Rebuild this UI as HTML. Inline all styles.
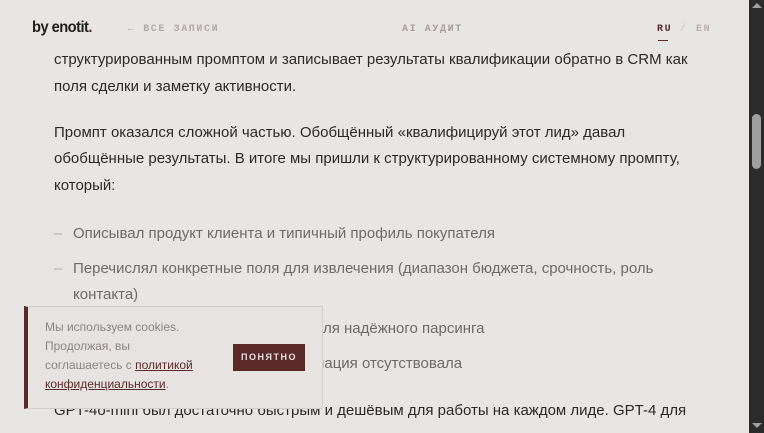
<!DOCTYPE html>
<html><head><meta charset="utf-8"><style>
*{margin:0;padding:0;box-sizing:border-box}
body{width:764px;height:433px;overflow:hidden;background:#e8e6e4;font-family:"Liberation Sans",sans-serif;position:relative}
.l{position:absolute;left:54px;white-space:nowrap;font-size:15px;color:#2a2a2a;line-height:20px;letter-spacing:0}
.g{color:#6e6a68}
.d{position:absolute;left:54px;color:#b0aaa6;font-size:15px;line-height:20px}
.hdr{position:absolute;left:0;top:0;width:749px;height:51px;background:#e8e6e4}
.sb{position:absolute;right:0;top:0;width:15px;height:433px;background:#2b2b2b}
.mono{font-family:"Liberation Mono",monospace;font-size:10px;font-weight:bold;letter-spacing:1.6px;position:absolute}
.ck{position:absolute;left:24px;top:306px;width:299px;height:103px;background:#e6e3e1;border:1px solid #d2cecb;border-left:4px solid #5a2a2a}
.ck p{position:absolute;left:17px;top:11px;font-size:12px;line-height:19px;color:#8a8583;width:158px}
.ck a{color:#5a2a2a;text-decoration:underline}
.btn{position:absolute;left:205px;top:37px;width:72px;height:27px;background:#5a2a2a;color:#e8e0de;font-size:9px;font-weight:bold;letter-spacing:1.5px;text-align:center;line-height:27px;font-family:"Liberation Sans",sans-serif}
</style></head><body>
<div class="l" style="top:50px">структурированным промптом и записывает результаты квалификации обратно в CRM как</div>
<div class="l" style="top:77px">поля сделки и заметку активности.</div>
<div class="l" style="top:123px">Промпт оказался сложной частью. Обобщённый «квалифицируй этот лид» давал</div>
<div class="l" style="top:149px">обобщённые результаты. В итоге мы пришли к структурированному системному промпту,</div>
<div class="l" style="top:176px">который:</div>
<div class="d" style="top:224px">–</div><div class="l g" style="top:224px;left:73px">Описывал продукт клиента и типичный профиль покупателя</div>
<div class="d" style="top:259px">–</div><div class="l g" style="top:259px;left:73px">Перечислял конкретные поля для извлечения (диапазон бюджета, срочность, роль</div>
<div class="l g" style="top:285px;left:73px">контакта)</div>
<div class="d" style="top:319px">–</div><div class="l g" style="top:319px;left:73px">Требовал вывод в формате JSON для надёжного парсинга</div>
<div class="d" style="top:354px">–</div><div class="l g" style="top:354px;left:73px">Указывал, что делать, если информация отсутствовала</div>
<div class="l" style="top:401px">GPT-4o-mini был достаточно быстрым и дешёвым для работы на каждом лиде. GPT-4 для</div>
<div class="hdr">
<div style="position:absolute;left:32px;top:19px;font-size:16px;color:#1e1e1e;letter-spacing:-0.6px;font-weight:bold;transform:scaleX(0.92);transform-origin:left">by enotit<span style="color:#5a2a2a">.</span></div>
<div class="mono" style="left:128px;top:24px;color:#b3a9a8">← ВСЕ ЗАПИСИ</div>
<div class="mono" style="left:402px;top:24px;color:#a89c9c">AI АУДИТ</div>
<div class="mono" style="left:657px;top:24px;color:#5a2a2a">RU</div>
<div style="position:absolute;left:658px;top:40px;width:10px;height:1px;background:#5a2a2a"></div>
<div class="mono" style="left:680px;top:24px;color:#d0c8c8">/</div>
<div class="mono" style="left:696px;top:24px;color:#b9afae">EN</div>
</div>
<div class="ck"><p>Мы используем cookies. Продолжая, вы соглашаетесь с <a>политикой конфиденциальности</a>.</p><div class="btn">ПОНЯТНО</div></div>
<div class="sb">
<div style="position:absolute;left:3px;top:3px;width:0;height:0;border-left:5px solid transparent;border-right:5px solid transparent;border-bottom:5px solid #a0a0a0"></div>
<div style="position:absolute;left:3px;top:114px;width:9px;height:55px;border-radius:5px;background:#9f9f9f"></div>
<div style="position:absolute;left:3px;top:423px;width:0;height:0;border-left:5px solid transparent;border-right:5px solid transparent;border-top:5px solid #a0a0a0"></div>
</div>
</body></html>
